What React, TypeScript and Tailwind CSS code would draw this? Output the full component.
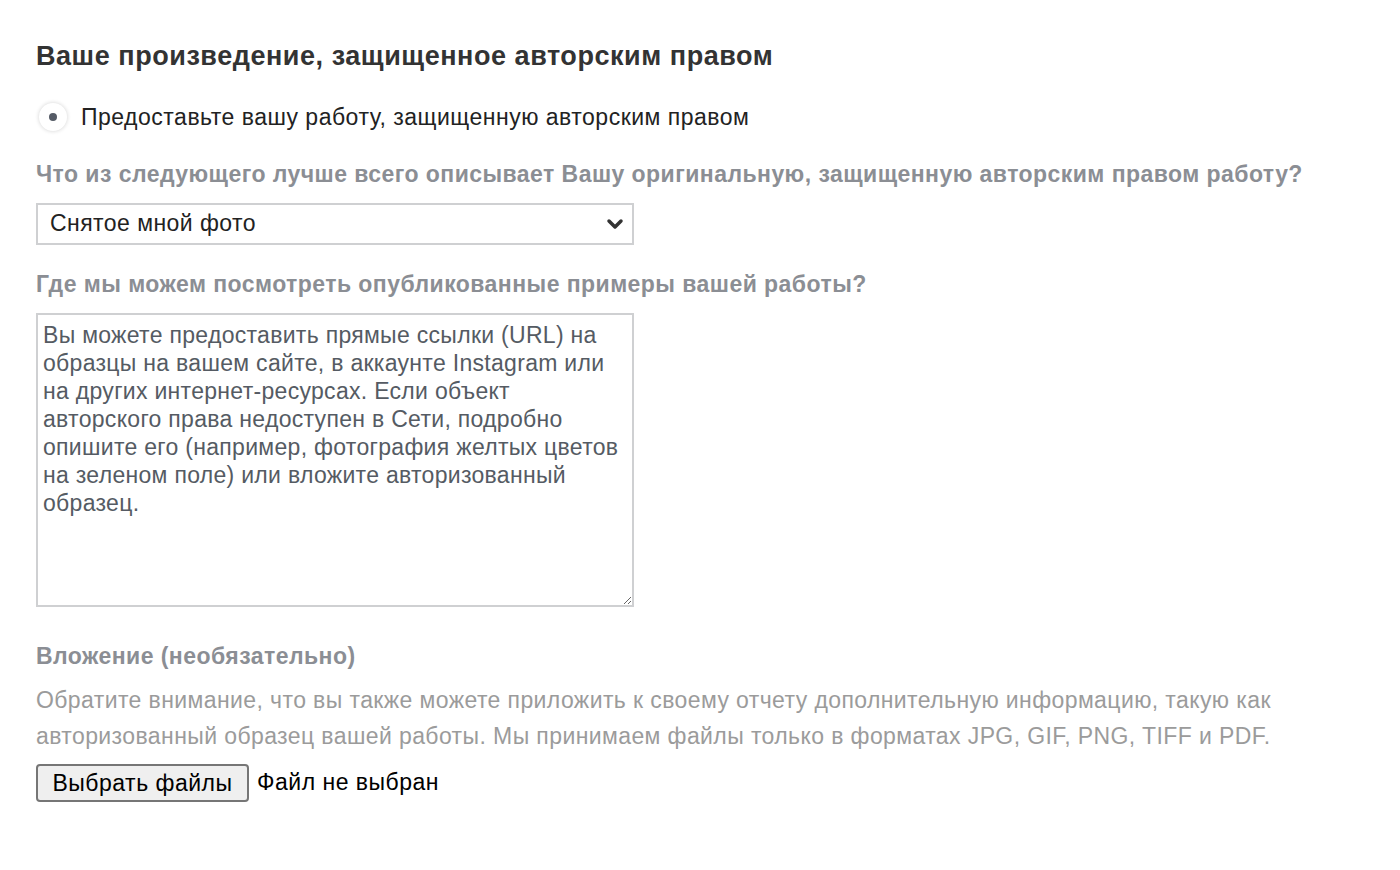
import { ChevronDown } from "lucide-react"

export default function App() {
  return (
    <div className="min-h-screen bg-white font-['Liberation_Sans',Arial,sans-serif]">
      <div className="px-9 pt-[41px] w-[1400px]">
        <h2 className="text-[27px] font-bold tracking-[0.55px] text-[#333] leading-[30px]">
          Ваше произведение, защищенное авторским правом
        </h2>

        <label className="mt-[29px] flex items-center gap-[14px]">
          <span className="ml-[3px] w-[28px] h-[28px] rounded-full bg-white shadow-[0_0_4px_rgba(0,0,0,0.18)] flex items-center justify-center">
            <span className="w-[8px] h-[8px] rounded-full bg-[#555b66]" />
          </span>
          <span className="text-[23px] tracking-[0.5px] text-[#222]">
            Предоставьте вашу работу, защищенную авторским правом
          </span>
        </label>

        <p className="mt-[26px] text-[23px] tracking-[0.45px] font-bold text-[#8b8e94] leading-[26px]">
          Что из следующего лучше всего описывает Вашу оригинальную, защищенную авторским правом работу?
        </p>
        <div className="mt-[16px] w-[598px] h-[42px] border-2 border-[#cfd0d2] flex items-center justify-between pl-[12px] pr-[5px]">
          <span className="text-[23px] tracking-[0.45px] text-[#222]">Снятое мной фото</span>
          <ChevronDown className="w-[24px] h-[24px] text-[#333]" strokeWidth={3.5} />
        </div>

        <p className="mt-[26px] text-[23px] tracking-[0.45px] font-bold text-[#8b8e94] leading-[26px]">
          Где мы можем посмотреть опубликованные примеры вашей работы?
        </p>
        <textarea
          className="mt-[16px] block w-[598px] h-[294px] border-2 border-[#cfd0d2] px-[5px] py-[6px] text-[23px] tracking-[0.3px] leading-[28px] text-[#222] placeholder:text-[#555b63] outline-none"
          placeholder="Вы можете предоставить прямые ссылки (URL) на образцы на вашем сайте, в аккаунте Instagram или на других интернет-ресурсах. Если объект авторского права недоступен в Сети, подробно опишите его (например, фотография желтых цветов на зеленом поле) или вложите авторизованный образец."
        />

        <p className="mt-[36px] text-[23px] tracking-[0.45px] font-bold text-[#8b8e94] leading-[26px]">
          Вложение (необязательно)
        </p>
        <p className="mt-[13px] text-[23px] tracking-[0.4px] text-[#9b9b9b] leading-[36px]">
          Обратите внимание, что вы также можете приложить к своему отчету дополнительную информацию, такую как
          <br />
          авторизованный образец вашей работы. Мы принимаем файлы только в форматах JPG, GIF, PNG, TIFF и PDF.
        </p>
        <div className="mt-[10px] flex items-center gap-[8px]">
          <button className="h-[38px] w-[213px] border-2 border-[#767676] rounded-[4px] bg-[#efefef] text-[23px] tracking-[0.5px] text-black">
            Выбрать файлы
          </button>
          <span className="text-[23px] tracking-[0.5px] text-black">Файл не выбран</span>
        </div>
      </div>
    </div>
  )
}
